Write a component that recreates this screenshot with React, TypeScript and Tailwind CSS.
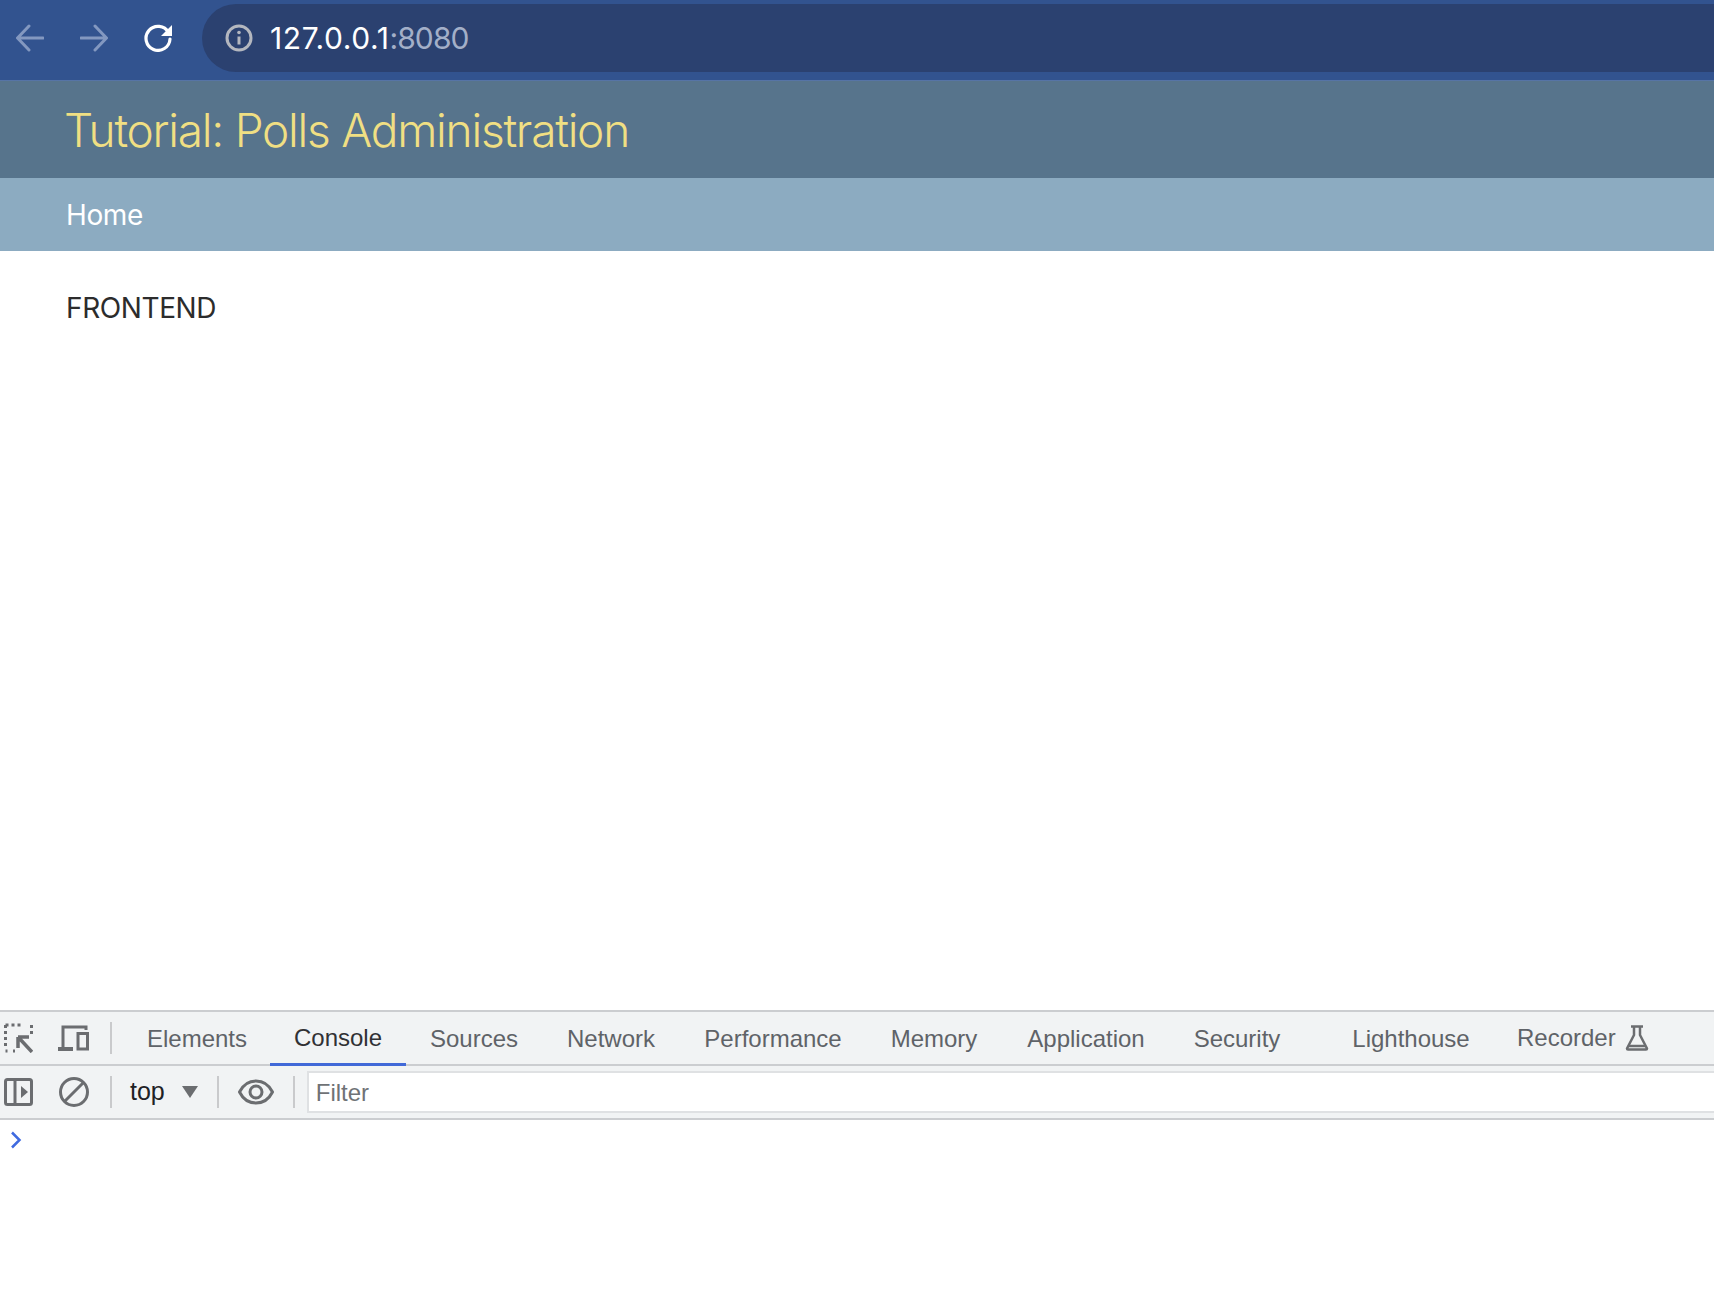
const TABS = [
  { name: "Elements", cls: "w-[146px]" },
  { name: "Console", cls: "w-[136px] text-[#303134] border-b-[3px] border-[#4169d8]" },
  { name: "Sources", cls: "w-[136px]" },
  { name: "Network", cls: "w-[138px]" },
  { name: "Performance", cls: "w-[186px]" },
  { name: "Memory", cls: "w-[136px]" },
  { name: "Application", cls: "w-[168px]" },
  { name: "Security", cls: "w-[134px] mr-[24px]" },
  { name: "Lighthouse", cls: "w-[166px]" },
];

function Divider() {
  return <div className="w-[2px] h-[32px] bg-[#c9cacc] shrink-0" />;
}

export default function App() {
  return (
    <div className="flex flex-col h-[1302px] w-full overflow-hidden bg-white font-['Inter',sans-serif]">
      {/* browser chrome */}
      <div className="h-[81px] shrink-0 bg-[#32538f] border-b border-[#5674a6] flex items-center pb-[4px]">
        <svg className="ml-[16px] shrink-0" width="28" height="28" viewBox="0 0 28 28" fill="none" stroke="#8398c0" strokeWidth="3" strokeLinecap="round" strokeLinejoin="round">
          <path d="M27 14H2M13 2 1.500 14 13 26" />
        </svg>
        <svg className="ml-[36px] shrink-0" width="28" height="28" viewBox="0 0 28 28" fill="none" stroke="#8398c0" strokeWidth="3" strokeLinecap="round" strokeLinejoin="round">
          <path d="M1 14h25M15 2l11.500 12L15 26" />
        </svg>
        <svg className="ml-[36px] shrink-0" width="30" height="28" viewBox="0 0 30 28" fill="none">
          <path d="M24.500 8.500A12 12 0 1 0 26 15" stroke="#fff" strokeWidth="3.200" strokeLinecap="round" />
          <path d="M28 1v11H17z" fill="#fff" />
        </svg>
        <div className="ml-[28px] flex-1 h-[68px] rounded-l-full bg-[#2b4170] flex items-center pl-[23px]">
          <svg width="28" height="28" viewBox="0 0 28 28" fill="none" className="shrink-0">
            <circle cx="14" cy="14" r="12" stroke="#b4b7bf" strokeWidth="3" />
            <path d="M14 12.500v8" stroke="#b4b7bf" strokeWidth="3" />
            <circle cx="14" cy="8.500" r="1.800" fill="#b4b7bf" />
          </svg>
          <span className="ml-[17px] text-[30px] text-white leading-none tracking-[0.6px]">127.0.0.1<span className="text-[#a3afc8] tracking-[-0.9px]">:8080</span></span>
        </div>
      </div>

      {/* django admin header */}
      <div className="h-[97px] shrink-0 bg-[#57748c] flex items-center pl-[64px]">
        <h1 className="text-[46px] font-light text-[#f0df83] leading-none tracking-[-1.25px]">Tutorial: Polls Administration</h1>
      </div>
      <div className="h-[73px] shrink-0 bg-[#8cabc1] flex items-center pl-[66px]">
        <span className="text-[28px] text-white tracking-[-0.4px]">Home</span>
      </div>

      <div className="flex-1 pl-[66px] pt-[40px]">
        <p className="text-[28px] text-[#2c2c2c] leading-[34px] tracking-[-0.4px]">FRONTEND</p>
      </div>

      {/* devtools */}
      <div className="h-[292px] shrink-0 font-['Liberation_Sans',sans-serif]">
        <div className="h-[56px] bg-[#f1f3f4] border-y-2 border-[#cbcdd0] flex items-stretch text-[24px] text-[#5f6368]">
          <div className="w-[124px] shrink-0 flex items-center">
            <svg className="ml-[4px] shrink-0" width="29" height="30" viewBox="0 0 29 30" fill="none">
              <path d="M1.500 2v22M1.500 2h18M27.500 2v10" stroke="#6b6d70" strokeWidth="3" strokeDasharray="3 3" />
              <path d="M9 28h2M1.500 28h2" stroke="#6b6d70" strokeWidth="3" />
              <path d="M14 14h11M14 14v11M15 15l13 14" stroke="#6b6d70" strokeWidth="3.500" />
            </svg>
            <svg className="ml-[25px] shrink-0" width="31" height="26" viewBox="0 0 31 26" fill="none" stroke="#6b6d70">
              <path d="M5 24V2h23v3" strokeWidth="3" />
              <path d="M0 24h15" strokeWidth="4" />
              <rect x="20" y="8.500" width="9.500" height="15.500" strokeWidth="3" />
            </svg>
            <div className="ml-[21px]"><Divider /></div>
          </div>
          {TABS.map((t) => (
            <div key={t.name} className={`flex items-center justify-center shrink-0 -mb-[2px] ${t.cls}`}>{t.name}</div>
          ))}
          <div className="flex items-center gap-[9px] shrink-0 pl-[23px]">
            <span>Recorder</span>
            <svg width="24" height="26" viewBox="0 0 24 26" fill="none" stroke="#6b6d70" strokeWidth="2.500">
              <path d="M6 1.500h12M9 1.500V10L2 23.500c0 0 0 1 1 1h18c1 0 1-1 1-1L15 10V1.500" />
              <path d="M4 21h16" />
            </svg>
          </div>
        </div>

        <div className="h-[54px] bg-[#f1f3f4] border-b-2 border-[#cbcdd0] flex items-center text-[24px]">
          <svg className="ml-[4px] shrink-0" width="29" height="28" viewBox="0 0 29 28" fill="none">
            <rect x="1.500" y="1.500" width="26" height="25" rx="2" stroke="#6b6d70" strokeWidth="3" />
            <path d="M11 2v24" stroke="#6b6d70" strokeWidth="3" />
            <path d="M17 8v12l7-6z" fill="#6b6d70" />
          </svg>
          <svg className="ml-[26px] shrink-0" width="30" height="30" viewBox="0 0 30 30" fill="none" stroke="#6b6d70" strokeWidth="3">
            <circle cx="15" cy="15" r="13.500" />
            <path d="M5.500 24.500l19-19" />
          </svg>
          <div className="ml-[21px]"><Divider /></div>
          <span className="ml-[18px] text-[25px] text-[#202124]">top</span>
          <svg className="ml-[17px] shrink-0" width="16" height="12" viewBox="0 0 16 12" fill="#6b6d70">
            <path d="M0 0h16L8 12z" />
          </svg>
          <div className="ml-[19px]"><Divider /></div>
          <svg className="ml-[19px] shrink-0" width="36" height="26" viewBox="0 0 36 26" fill="none" stroke="#6b6d70" strokeWidth="3">
            <path d="M1.500 13C5 6 11 2 18 2s13 4 16.500 11C31 20 25 24 18 24S5 20 1.500 13z" />
            <circle cx="18" cy="13" r="6" />
          </svg>
          <div className="ml-[19px]"><Divider /></div>
          <div className="ml-[12px] flex-1 h-[42px] bg-white border-2 border-r-0 border-[#dfe1e3] flex items-center pl-[7px] pt-[2px] text-[#6f7276]">Filter</div>
        </div>

        <div className="pl-[10px] pt-[11px]">
          <svg width="12" height="18" viewBox="0 0 12 18" fill="none" stroke="#3f6ae0" strokeWidth="2.500">
            <path d="M2 1.500 9.500 9 2 16.500" />
          </svg>
        </div>
      </div>
    </div>
  );
}
